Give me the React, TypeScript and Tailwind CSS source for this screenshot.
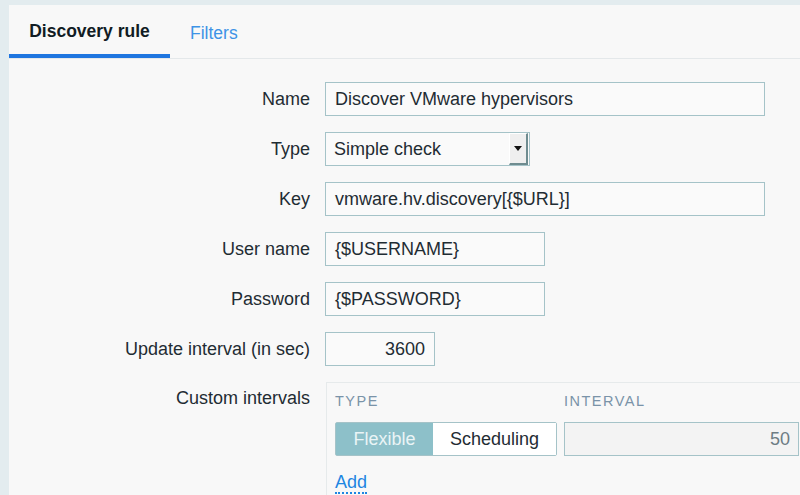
const font = { fontFamily: '"Liberation Sans", Arial, sans-serif' };

function Row({ label, children }: { label: string; children: React.ReactNode }) {
  return (
    <div className="flex items-center h-[34px]">
      <div className="w-[301px] text-right text-[#1f2c33] text-[18px]">{label}</div>
      <div className="ml-[15px] flex">{children}</div>
    </div>
  );
}

function TextBox({ value, w, right }: { value: string; w: string; right?: boolean }) {
  return (
    <div
      className={`${w} h-[34px] border border-[#a5c3c8] bg-[#fafafa] flex items-center px-[9px] text-[18px] text-[#1f2c33] ${right ? "justify-end" : ""}`}
    >
      {value}
    </div>
  );
}

export default function App() {
  return (
    <div className="w-[800px] h-[495px] overflow-hidden bg-[#e3ecef] pl-[9px] pt-[5px]" style={font}>
      <div className="h-full bg-[#f8f8f8]">
        {/* tabs */}
        <div className="flex h-[54px] border-b border-[#e4e8ea]">
          <div className="w-[161px] flex items-center justify-center border-b-4 border-[#1f76e0] font-bold text-[17.5px] text-[#111c24] pt-[3px]">
            Discovery rule
          </div>
          <div className="px-[20px] flex items-center text-[17.5px] text-[#3d93e6] pt-[3px]">Filters</div>
        </div>

        {/* form */}
        <div className="flex flex-col gap-[16px] pt-[23px]">
          <Row label="Name">
            <TextBox value="Discover VMware hypervisors" w="w-[440px]" />
          </Row>
          <Row label="Type">
            <div className="w-[205px] h-[34px] border border-[#a5c3c8] bg-[#fafafa] flex items-center text-[18px] text-[#1f2c33]">
              <div className="flex-1 pl-[8px]">Simple check</div>
              <div className="w-[19px] h-[32px] mr-[1px] bg-[#efefef] border-r-2 border-b-2 border-[#6f8c90] border-l border-t border-l-white border-t-white flex items-center justify-center">
                <svg width="8" height="5" viewBox="0 0 8 5">
                  <path d="M0 0h8L4 5z" fill="#111" />
                </svg>
              </div>
            </div>
          </Row>
          <Row label="Key">
            <TextBox value="vmware.hv.discovery[{$URL}]" w="w-[440px]" />
          </Row>
          <Row label="User name">
            <TextBox value="{$USERNAME}" w="w-[220px]" />
          </Row>
          <Row label="Password">
            <TextBox value="{$PASSWORD}" w="w-[220px]" />
          </Row>
          <Row label="Update interval (in sec)">
            <TextBox value="3600" w="w-[110px]" right />
          </Row>

          <div className="flex">
            <div className="w-[301px] text-right text-[#1f2c33] text-[18px] pt-[3px]">Custom intervals</div>
            <div className="ml-[16px] flex-1 border border-[#e6eaeb] border-r-0 pl-[8px] pt-[8px] h-[140px]">
              <div className="flex text-[14.5px] tracking-[1.5px] text-[#7a93a8] h-[22px] items-center">
                <div className="w-[229px]">TYPE</div>
                <div>INTERVAL</div>
              </div>
              <div className="flex mt-[9px]">
                <div className="flex w-[222px] h-[34px] border border-[#a5c3c8] rounded-[2px] text-[18px]">
                  <div className="w-[97px] bg-[#8dc0c9] text-[#eaf4f6] flex items-center justify-center">Flexible</div>
                  <div className="flex-1 bg-white text-[#1f2c33] flex items-center justify-center">Scheduling</div>
                </div>
                <div className="ml-[7px] w-[235px] h-[34px] border border-[#a5c3c8] bg-[#f3f3f3] flex items-center justify-end pr-[8px] text-[18px] text-[#6d7c84]">
                  50
                </div>
              </div>
              <div className="mt-[17px] text-[18px] text-[#1e86e2] leading-[18px]">
                <span className="border-b-2 border-dotted border-[#1e86e2]">Add</span>
              </div>
            </div>
          </div>
        </div>
      </div>
    </div>
  );
}
